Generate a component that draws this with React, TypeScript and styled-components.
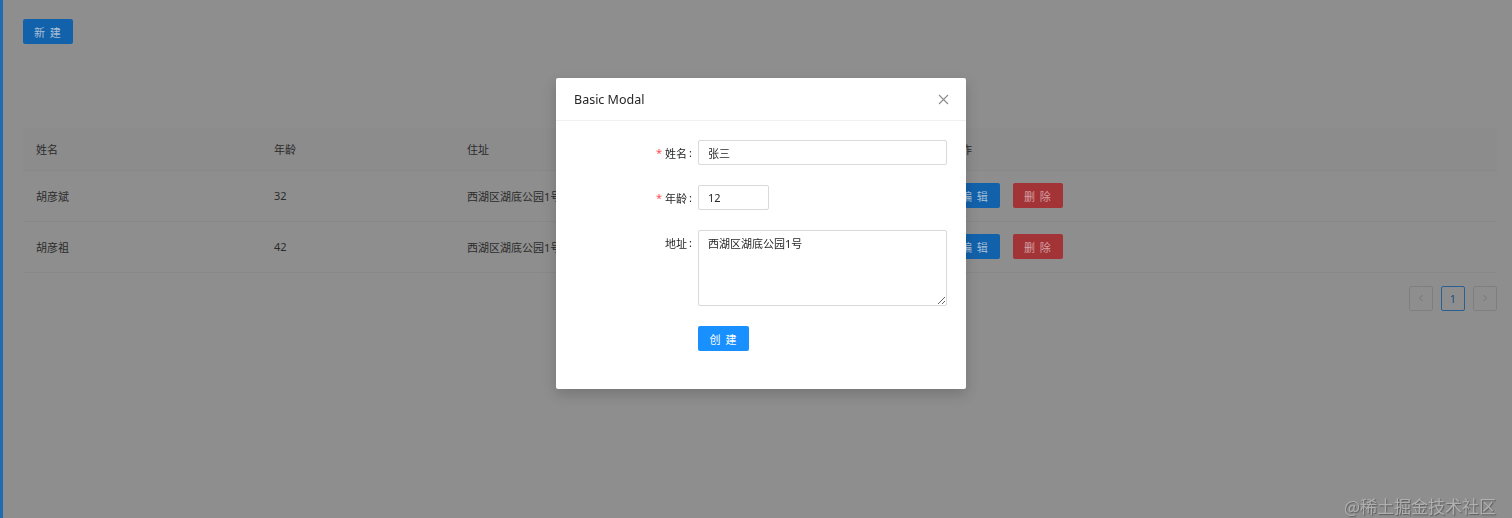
import React from 'react';
import styled, { createGlobalStyle } from 'styled-components';

const GlobalStyle = createGlobalStyle`
  html, body {
    margin: 0;
    padding: 0;
    background: #8e8e8e;
  }
  body {
    font-family: "Noto Sans", "Noto Sans CJK SC", sans-serif;
    font-size: 11px;
    color: #2b2b2b;
  }
`;

interface IUser {
  key: number;
  name: string;
  age: number;
  address: string;
}

const users: IUser[] = [
  { key: 1, name: '胡彦斌', age: 32, address: '西湖区湖底公园1号' },
  { key: 2, name: '胡彦祖', age: 42, address: '西湖区湖底公园1号' },
];

const App = () => {
  return (
    <>
      <GlobalStyle />
      <Page>
        <DimButton $tone='blue'>新 建</DimButton>
        <TableWrap>
          <Table>
            <thead>
              <tr>
                <Th>姓名</Th>
                <Th>年龄</Th>
                <Th>住址</Th>
                <Th>操作</Th>
              </tr>
            </thead>
            <tbody>
              {users.map((u) => (
                <tr key={u.key}>
                  <Td>{u.name}</Td>
                  <Td>{u.age}</Td>
                  <Td>{u.address}</Td>
                  <Td>
                    <Actions>
                      <DimButton $tone='blue'>编 辑</DimButton>
                      <DimButton $tone='red'>删 除</DimButton>
                    </Actions>
                  </Td>
                </tr>
              ))}
            </tbody>
          </Table>
          <Pagination>
            <PageItem>
              <svg width='8' height='8' viewBox='0 0 8 8'>
                <path d='M5.5 1 L2.5 4 L5.5 7' fill='none' stroke='#767676' strokeWidth='1' />
              </svg>
            </PageItem>
            <PageItem $active>1</PageItem>
            <PageItem>
              <svg width='8' height='8' viewBox='0 0 8 8'>
                <path d='M2.5 1 L5.5 4 L2.5 7' fill='none' stroke='#767676' strokeWidth='1' />
              </svg>
            </PageItem>
          </Pagination>
        </TableWrap>
      </Page>

      <ModalWrap>
        <Modal>
          <ModalHeader>
            <ModalTitle>Basic Modal</ModalTitle>
            <CloseButton aria-label='close'>
              <svg width='11' height='11' viewBox='0 0 11 11'>
                <path d='M1 1 L10 10 M10 1 L1 10' stroke='#8c8c8c' strokeWidth='1.1' />
              </svg>
            </CloseButton>
          </ModalHeader>
          <ModalBody>
            <FormRow>
              <Label $required>姓名</Label>
              <Input defaultValue='张三' />
            </FormRow>
            <FormRow>
              <Label $required>年龄</Label>
              <Input defaultValue='12' $narrow />
            </FormRow>
            <FormRow>
              <Label>地址</Label>
              <TextArea defaultValue='西湖区湖底公园1号' />
            </FormRow>
            <FormRow>
              <span />
              <SubmitButton>创 建</SubmitButton>
            </FormRow>
          </ModalBody>
        </Modal>
      </ModalWrap>

      <Watermark>@稀土掘金技术社区</Watermark>
    </>
  );
};

const Page = styled.div`
  min-height: 518px;
  box-sizing: border-box;
  border-left: 3px solid #1f6cb0;
  padding: 19px 15px 0 20px;
`;

const DimButton = styled.button<{ $tone: 'blue' | 'red' }>`
  height: 25px;
  padding: 0 11px;
  border: none;
  border-radius: 2px;
  font-family: inherit;
  font-size: 11px;
  letter-spacing: 1px;
  cursor: pointer;
  background: ${(p) => (p.$tone === 'blue' ? '#1262ab' : '#a23336')};
  color: ${(p) => (p.$tone === 'blue' ? '#a7bfd6' : '#d4a0a2')};
`;

const TableWrap = styled.div`
  margin-top: 84px;
`;

const Table = styled.table`
  width: 100%;
  border-collapse: collapse;
  table-layout: fixed;

  th {
    box-sizing: border-box;
  }
  th:nth-child(1) {
    width: 238px;
  }
  th:nth-child(2) {
    width: 193px;
  }
  th:nth-child(3) {
    width: 483px;
  }
`;

const Th = styled.th`
  height: 42px;
  padding: 0 13px;
  text-align: left;
  font-weight: 400;
  background: #8c8c8c;
  border-bottom: 1px solid #888888;
`;

const Td = styled.td`
  height: 50px;
  padding: 0 13px;
  border-bottom: 1px solid #888888;
  white-space: nowrap;
`;

const Actions = styled.div`
  display: flex;
  gap: 13px;
`;

const Pagination = styled.ul`
  display: flex;
  justify-content: flex-end;
  gap: 8px;
  list-style: none;
  margin: 13px 0 0;
  padding: 0;
`;

const PageItem = styled.li<{ $active?: boolean }>`
  width: 24px;
  height: 25px;
  box-sizing: border-box;
  display: flex;
  align-items: center;
  justify-content: center;
  border: 1px solid ${(p) => (p.$active ? '#2a5f93' : '#7f7f7f')};
  border-radius: 2px;
  color: #234f7c;
  font-size: 11px;
`;

const ModalWrap = styled.div`
  position: fixed;
  inset: 0;
  display: flex;
  justify-content: center;
  align-items: flex-start;
  padding: 78px 0 0 10px;
`;

const Modal = styled.div`
  width: 410px;
  background: #fff;
  border-radius: 2px;
  box-shadow: 0 5px 14px rgba(0, 0, 0, 0.18);
`;

const ModalHeader = styled.div`
  height: 43px;
  box-sizing: border-box;
  display: flex;
  align-items: center;
  justify-content: space-between;
  padding: 0 13px 0 18px;
  border-bottom: 1px solid #f0f0f0;
`;

const ModalTitle = styled.div`
  font-size: 12.5px;
  color: #262626;
`;

const CloseButton = styled.button`
  border: none;
  background: none;
  padding: 4px;
  display: flex;
  cursor: pointer;
`;

const ModalBody = styled.div`
  padding: 19px 19px 38px;
  display: flex;
  flex-direction: column;
  gap: 20px;
`;

const FormRow = styled.div`
  display: grid;
  grid-template-columns: 123px 1fr;
  align-items: start;
`;

const Label = styled.label<{ $required?: boolean }>`
  height: 25px;
  display: flex;
  align-items: center;
  justify-content: flex-end;
  padding-right: 6px;
  color: #262626;
  font-size: 11px;

  &::before {
    content: '*';
    display: ${(p) => (p.$required ? 'inline' : 'none')};
    color: #ff4d4f;
    margin-right: 3px;
    font-size: 11px;
  }

  &::after {
    content: ':';
    margin-left: 2px;
  }
`;

const Input = styled.input<{ $narrow?: boolean }>`
  width: ${(p) => (p.$narrow ? '71px' : '100%')};
  height: 25px;
  box-sizing: border-box;
  border: 1px solid #d9d9d9;
  border-radius: 2px;
  padding: 0 9px;
  font-family: inherit;
  font-size: 11px;
  color: #262626;
  outline: none;
`;

const TextArea = styled.textarea`
  width: 100%;
  height: 76px;
  box-sizing: border-box;
  border: 1px solid #d9d9d9;
  border-radius: 2px;
  padding: 4px 9px;
  font-family: inherit;
  font-size: 11px;
  color: #262626;
  outline: none;
  margin: 0;
  display: block;
`;

const SubmitButton = styled.button`
  width: 51px;
  height: 25px;
  border: none;
  border-radius: 2px;
  background: #1890ff;
  color: #fff;
  font-family: inherit;
  font-size: 11px;
  letter-spacing: 1px;
  cursor: pointer;
`;

const Watermark = styled.div`
  position: fixed;
  right: 16px;
  bottom: 0;
  font-size: 17px;
  color: #b0b0b0;
  text-shadow: 1px 1px 1px rgba(60, 60, 60, 0.6);
  font-family: "Noto Sans CJK SC", sans-serif;
`;

export default App;
